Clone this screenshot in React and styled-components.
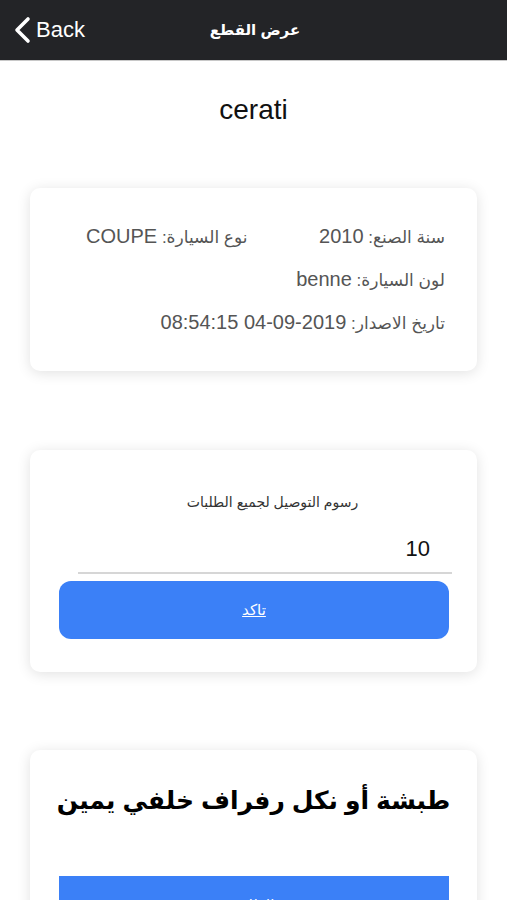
import React, { useState } from 'react'
import styled, { createGlobalStyle } from 'styled-components'

const GlobalStyle = createGlobalStyle`
  * { box-sizing: border-box; }
  body {
    margin: 0;
    background: #ffffff;
    font-family: "Liberation Sans", "DejaVu Sans", Arial, sans-serif;
  }
`

const Page = styled.div`
  width: 507px;
  height: 900px;
  background: #fff;
  overflow: hidden;
`

const TopBar = styled.header`
  height: 61px;
  background: #232427;
  border-bottom: 1px solid #c8c8c8;
  display: grid;
  grid-template-columns: 1fr auto 1fr;
  align-items: center;
  color: #fff;
`

const BackButton = styled.button`
  display: flex;
  align-items: center;
  gap: 5px;
  background: none;
  border: none;
  color: #fff;
  font-family: inherit;
  font-size: 22px;
  padding: 0 0 0 13px;
  justify-self: start;
  cursor: pointer;
`

const Title = styled.h1`
  margin: 0;
  font-size: 15px;
  font-weight: bold;
  direction: rtl;
  padding-left: 3px;
`

const Content = styled.main`
  display: flex;
  flex-direction: column;
  align-items: center;
  padding: 29px 30px 0;
`

const Heading = styled.h2`
  margin: 0 0 58px;
  font-size: 28px;
  font-weight: normal;
  color: #111;
  line-height: 40px;
`

const Card = styled.section`
  width: 447px;
  flex-shrink: 0;
  background: #fff;
  border-radius: 10px;
  box-shadow: 0 2px 14px rgba(0, 0, 0, 0.12);
  margin-bottom: ${p => p.$gap || 0}px;
  padding: ${p => p.$pad};
  direction: rtl;
`

const InfoRow = styled.div`
  display: grid;
  grid-template-columns: ${p => (p.$split ? '1fr 1fr' : '1fr')};
  height: 43px;
  align-items: center;
  color: #555;
  font-size: 20px;
`

const Label = styled.span`
  font-size: 17px;
`

const FeeLabel = styled.div`
  text-align: center;
  font-size: 14px;
  line-height: 20px;
  color: #333;
  padding-left: 38px;
`

const FeeInput = styled.input`
  display: block;
  width: 374px;
  height: 48px;
  margin: 14px 25px 0 0;
  border: none;
  border-bottom: 2px solid #d6d6d6;
  font-family: inherit;
  font-size: 22px;
  line-height: 25px;
  color: #111;
  padding: 10px 22px 11px 0;
  direction: rtl;
  background: transparent;
  &:focus { outline: none; }
`

const BlueButton = styled.button`
  display: block;
  width: 390px;
  height: 58px;
  margin: ${p => p.$m || '7px 28px 0 0'};
  border: none;
  border-radius: ${p => (p.$square ? 0 : 12)}px;
  background: #3b80f7;
  color: #fff;
  font-family: inherit;
  font-size: 15px;
  text-decoration: ${p => (p.$square ? 'none' : 'underline')};
  cursor: pointer;
`

const PartTitle = styled.h3`
  margin: 0;
  text-align: center;
  font-size: 25px;
  line-height: 30px;
  white-space: nowrap;
  font-weight: bold;
  color: #000;
`

const Chevron = () => (
  <svg width="18" height="28" viewBox="0 0 18 28" fill="none">
    <path d="M15 3 L4 14 L15 25" stroke="#fff" strokeWidth="3.6" strokeLinecap="round" strokeLinejoin="round" />
  </svg>
)

export default function App() {
  const [fee, setFee] = useState('10')
  return (
    <Page>
      <GlobalStyle />
      <TopBar>
        <BackButton><Chevron />Back</BackButton>
        <Title>عرض القطع</Title>
        <div />
      </TopBar>
      <Content>
        <Heading>cerati</Heading>

        <Card $gap={79} $pad="27px 32px 27px 32px">
          <InfoRow $split>
            <span><Label>سنة الصنع: </Label>2010</span>
            <span style={{ paddingRight: 6 }}><Label>نوع السيارة: </Label>COUPE</span>
          </InfoRow>
          <InfoRow>
            <span><Label>لون السيارة: </Label>benne</span>
          </InfoRow>
          <InfoRow>
            <span><Label>تاريخ الاصدار: </Label>2019-09-04 08:54:15</span>
          </InfoRow>
        </Card>

        <Card $gap={78} $pad="42px 0 33px">
          <FeeLabel>رسوم التوصيل لجميع الطلبات</FeeLabel>
          <FeeInput value={fee} onChange={e => setFee(e.target.value)} />
          <BlueButton>تاكد</BlueButton>
        </Card>

        <Card $pad="35px 0 40px">
          <PartTitle>طبشة أو نكل رفراف خلفي يمين</PartTitle>
          <BlueButton $square $m="61px 28px 0 0">الطلب</BlueButton>
        </Card>
      </Content>
    </Page>
  )
}
